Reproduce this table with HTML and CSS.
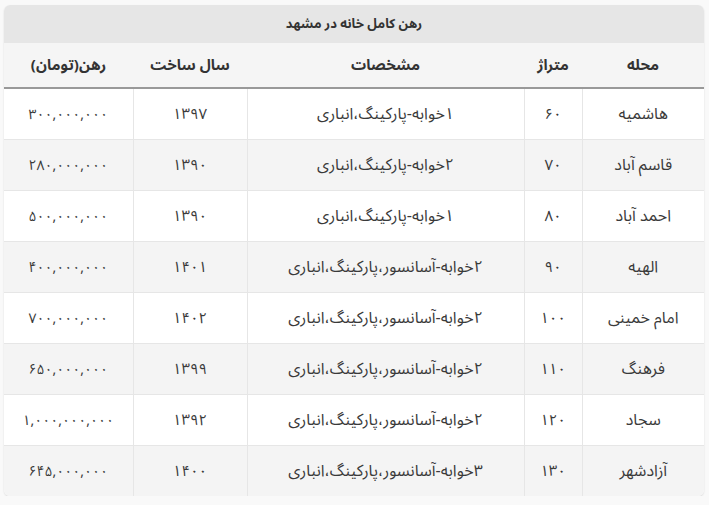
FILE: index.html
```html
<!DOCTYPE html>
<html lang="fa" dir="rtl">
<head>
<meta charset="utf-8">
<link rel="stylesheet" href="styles.css">
</head>
<body>
<div class="card">
  <div class="caption">رهن کامل خانه در مشهد</div>
  <table class="grid">
    <colgroup>
      <col class="c-area">
      <col class="c-size">
      <col class="c-spec">
      <col class="c-year">
      <col class="c-price">
    </colgroup>
    <thead>
      <tr><th>محله</th><th>متراژ</th><th>مشخصات</th><th>سال ساخت</th><th>رهن(تومان)</th></tr>
    </thead>
    <tbody>
      <tr><td>هاشمیه</td><td class="num">۶۰</td><td>۱خوابه-پارکینگ،انباری</td><td class="num">۱۳۹۷</td><td class="price">۳۰۰,۰۰۰,۰۰۰</td></tr>
      <tr><td>قاسم آباد</td><td class="num">۷۰</td><td>۲خوابه-پارکینگ،انباری</td><td class="num">۱۳۹۰</td><td class="price">۲۸۰,۰۰۰,۰۰۰</td></tr>
      <tr><td>احمد آباد</td><td class="num">۸۰</td><td>۱خوابه-پارکینگ،انباری</td><td class="num">۱۳۹۰</td><td class="price">۵۰۰,۰۰۰,۰۰۰</td></tr>
      <tr><td>الهیه</td><td class="num">۹۰</td><td>۲خوابه-آسانسور،پارکینگ،انباری</td><td class="num">۱۴۰۱</td><td class="price">۴۰۰,۰۰۰,۰۰۰</td></tr>
      <tr><td>امام خمینی</td><td class="num">۱۰۰</td><td>۲خوابه-آسانسور،پارکینگ،انباری</td><td class="num">۱۴۰۲</td><td class="price">۷۰۰,۰۰۰,۰۰۰</td></tr>
      <tr><td>فرهنگ</td><td class="num">۱۱۰</td><td>۲خوابه-آسانسور،پارکینگ،انباری</td><td class="num">۱۳۹۹</td><td class="price">۶۵۰,۰۰۰,۰۰۰</td></tr>
      <tr><td>سجاد</td><td class="num">۱۲۰</td><td>۲خوابه-آسانسور،پارکینگ،انباری</td><td class="num">۱۳۹۲</td><td class="price">۱,۰۰۰,۰۰۰,۰۰۰</td></tr>
      <tr><td>آزادشهر</td><td class="num">۱۳۰</td><td>۳خوابه-آسانسور،پارکینگ،انباری</td><td class="num">۱۴۰۰</td><td class="price">۶۴۵,۰۰۰,۰۰۰</td></tr>
    </tbody>
  </table>
</div>
</body>
</html>
```
FILE: styles.css
```css
html, body {
  margin: 0;
  padding: 0;
  background: #f9f9f9;
}
body {
  font-family: "Noto Sans Arabic", "DejaVu Sans", sans-serif;
  color: #333;
  padding: 5px 5px 0 4px;
}
.card {
  width: 700px;
  border-radius: 6px;
  overflow: hidden;
  background: #fff;
  box-shadow: 0 1px 2px rgba(0,0,0,0.12);
}
.caption {
  height: 38px;
  line-height: 38px;
  background: #e6e6e6;
  text-align: center;
  font-size: 13px;
  font-weight: bold;
  color: #333;
}
.grid {
  width: 100%;
  border-collapse: collapse;
  table-layout: fixed;
}
.c-area { width: 122px; }
.c-size { width: 58px; }
.c-spec { width: 277px; }
.c-year { width: 114px; }
.c-price { width: 129px; }
.grid th {
  height: 44px;
  background: #f5f5f5;
  font-size: 15px;
  font-weight: bold;
  color: #333;
  border-bottom: 2px solid #999;
  padding: 0;
}
.grid td {
  height: 50px;
  padding: 0;
  text-align: center;
  font-size: 16px;
  color: #3a3a3a;
  border: 1px solid #e6e6e6;
  border-top: none;
}
.grid td.num { font-size: 15px; }
.grid td.price { font-size: 14px; letter-spacing: -0.6px; }
.grid tr td:first-child { border-right: none; }
.grid tr td:last-child { border-left: none; }
.grid tbody tr:nth-child(even) td { background: #f4f4f4; }
.grid tbody tr:last-child td { border-bottom: none; }
```
